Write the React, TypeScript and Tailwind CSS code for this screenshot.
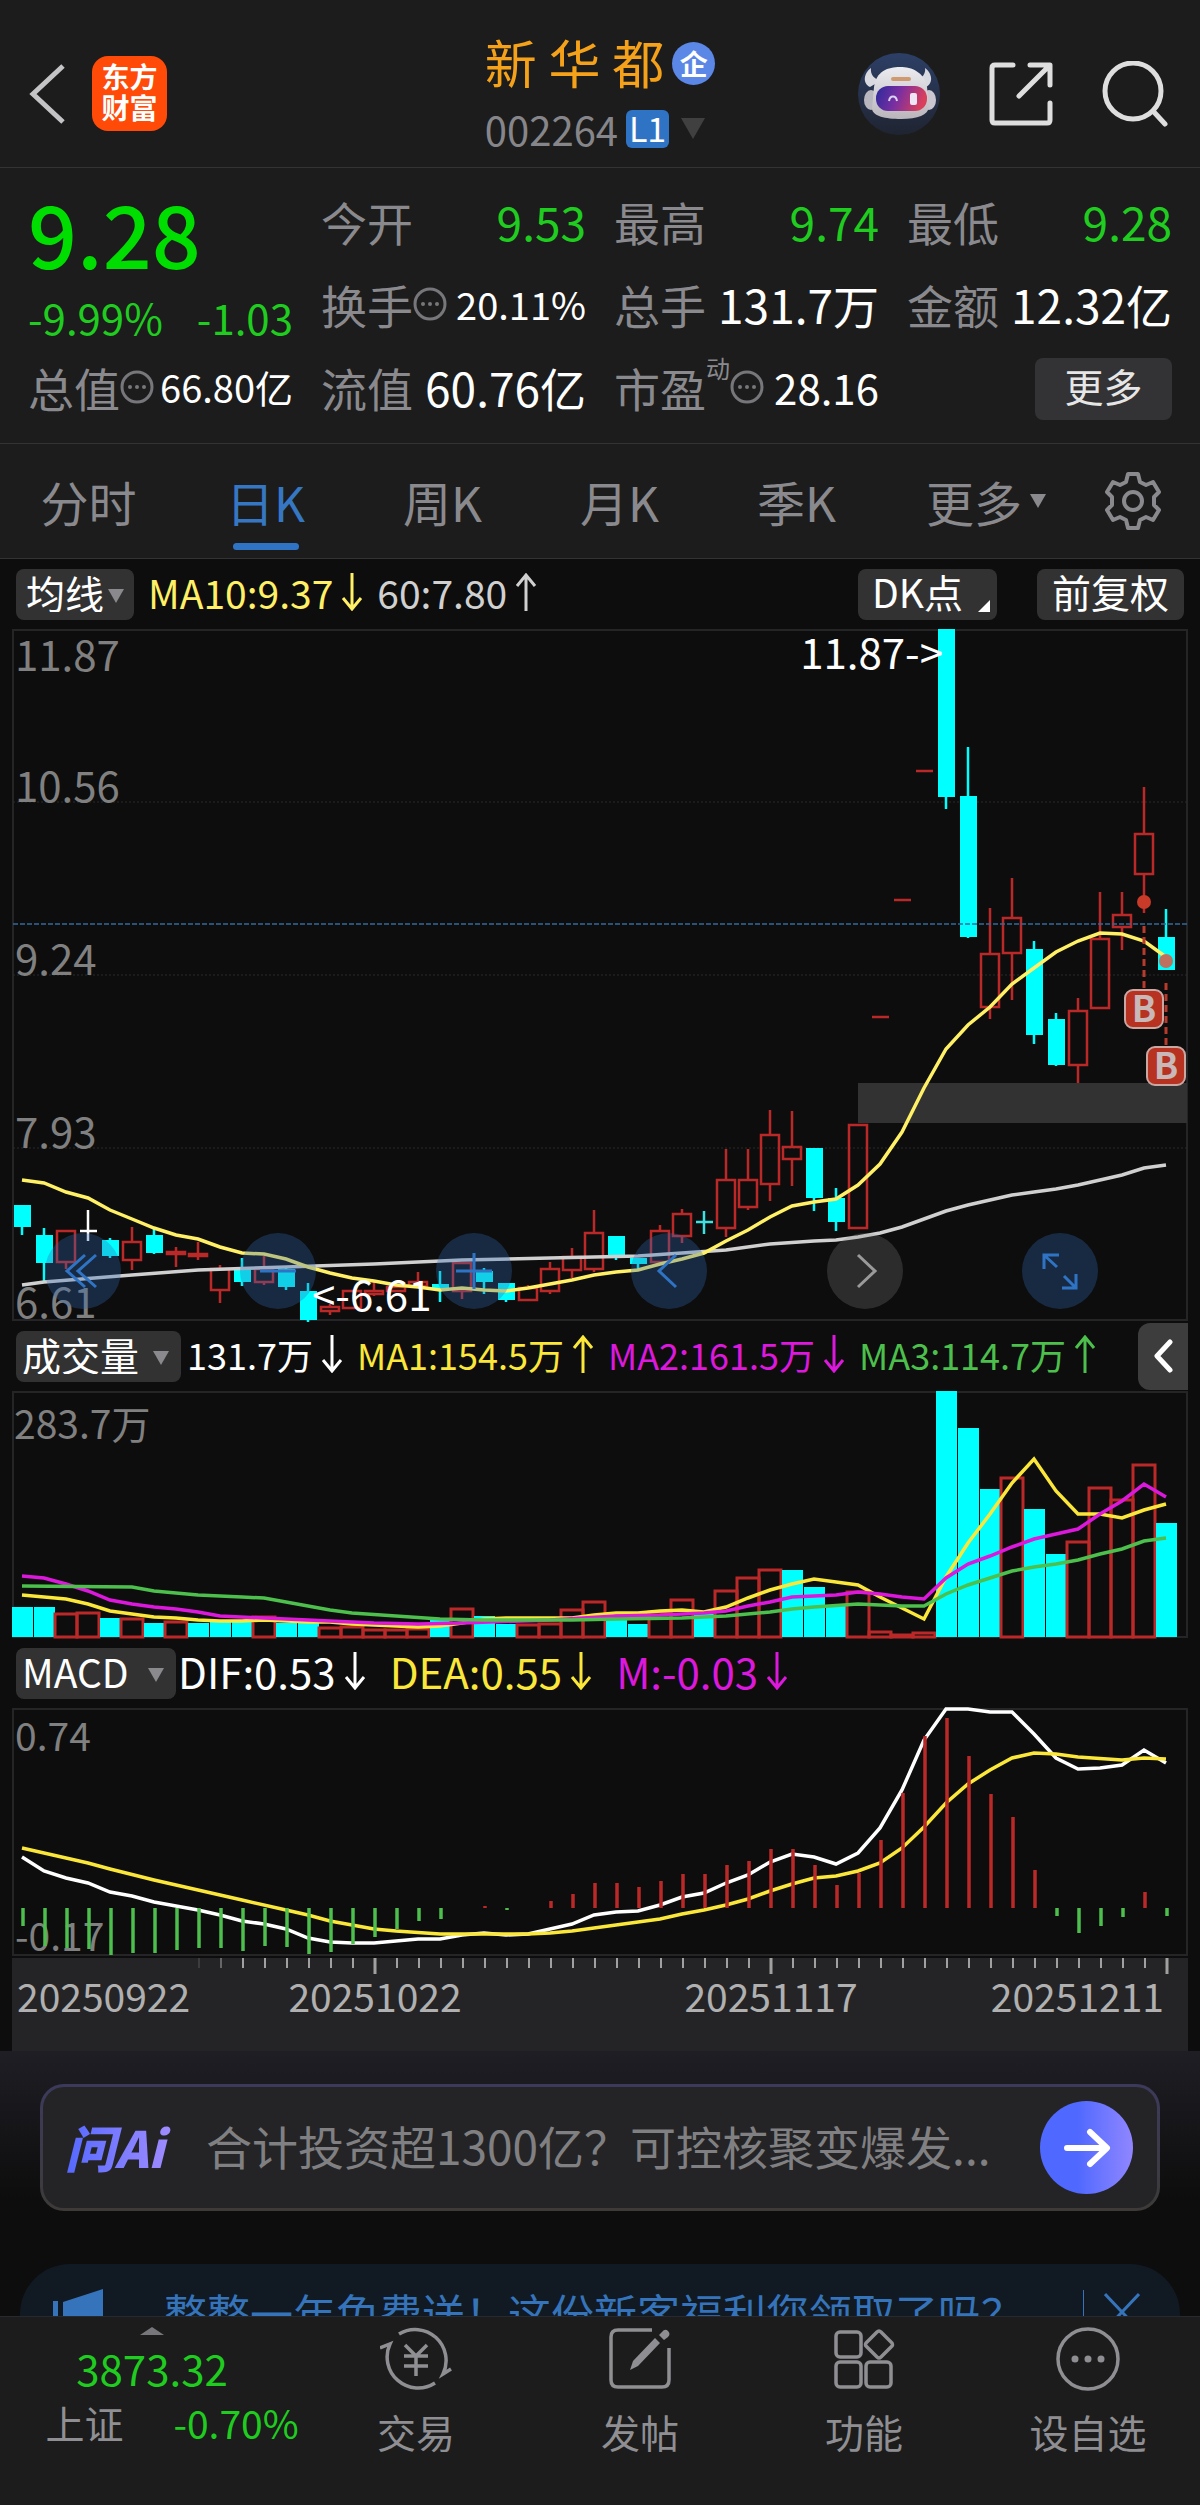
import { ReactNode, useState } from 'react'
import clsx from 'clsx'

type Point = [index: number, y: number]
type Side = 'up' | 'down'
// index is the position in the list: [side, body top, body bottom, high, low]
type Candle = [side: Side, top: number, bottom: number, high: number, low: number]

const STEP = 22
const FIRST = 22
const RED = '#bb2828'
const CYAN = '#00ffff'
const YELLOW = '#fbe73a'
const MAGENTA = '#dd18dd'
const GREEN = '#4cbf4c'

const xAt = (i: number) => FIRST + i * STEP
const toPoints = (points: Point[]) => points.map(([i, y]) => `${xAt(i)},${y}`).join(' ')
const series = (values: number[], start = 0): Point[] => values.map((y, i) => [i + start, y])

const CANDLES: Candle[] = [
  ['down', 1204, 1226, 1204, 1234], ['down', 1234, 1262, 1227, 1281], ['up', 1230, 1261, 1230, 1268],
  ['up', 1230, 1230, 1209, 1240], ['down', 1239, 1255, 1237, 1257], ['up', 1241, 1259, 1226, 1269],
  ['down', 1234, 1252, 1228, 1253], ['up', 1251, 1253, 1246, 1266], ['up', 1253, 1255, 1241, 1259],
  ['up', 1268, 1289, 1264, 1302], ['down', 1268, 1281, 1257, 1285], ['up', 1268, 1281, 1255, 1284],
  ['down', 1268, 1286, 1265, 1289], ['down', 1290, 1319, 1282, 1321], ['up', 1306, 1310, 1303, 1314],
  ['up', 1290, 1307, 1290, 1307], ['up', 1290, 1293, 1279, 1295], ['up', 1286, 1290, 1284, 1291],
  ['up', 1281, 1285, 1271, 1287], ['down', 1283, 1288, 1270, 1301], ['up', 1262, 1290, 1262, 1298],
  ['down', 1270, 1281, 1267, 1293], ['down', 1282, 1299, 1282, 1301], ['up', 1287, 1299, 1284, 1299],
  ['up', 1268, 1290, 1261, 1293], ['up', 1256, 1269, 1247, 1277], ['up', 1232, 1268, 1209, 1271],
  ['down', 1235, 1254, 1235, 1259], ['down', 1257, 1263, 1257, 1268], ['up', 1230, 1261, 1224, 1261],
  ['up', 1213, 1235, 1208, 1242], ['down', 1221, 1221, 1210, 1233], ['up', 1179, 1227, 1148, 1236],
  ['up', 1179, 1206, 1148, 1209], ['up', 1134, 1183, 1109, 1200], ['up', 1146, 1158, 1110, 1185],
  ['down', 1147, 1197, 1147, 1210], ['down', 1197, 1221, 1187, 1230], ['up', 1124, 1227, 1124, 1227],
  ['up', 1016, 1016, 1016, 1016], ['up', 899, 899, 899, 899], ['up', 770, 770, 770, 770],
  ['down', 628, 796, 628, 808], ['down', 795, 936, 746, 937], ['up', 953, 1006, 907, 1018],
  ['up', 917, 952, 877, 999], ['down', 948, 1034, 940, 1043], ['down', 1018, 1064, 1012, 1065],
  ['up', 1010, 1064, 997, 1082], ['up', 938, 1007, 891, 1007], ['up', 914, 926, 891, 949],
  ['up', 833, 873, 786, 912], ['down', 936, 969, 908, 969],
]

const MA10 = series([
  1179, 1182, 1191, 1197, 1209, 1218, 1227, 1234, 1238, 1246, 1252, 1253, 1258, 1266, 1272, 1277, 1280, 1284,
  1286, 1289, 1287, 1289, 1290, 1287, 1283, 1279, 1274, 1271, 1269, 1263, 1258, 1252, 1240, 1229, 1216, 1205,
  1201, 1198, 1184, 1163, 1131, 1087, 1048, 1024, 1006, 983, 967, 951, 940, 932, 933, 940, 956,
])
const MA60: Point[] = [
  [0, 1284], [1, 1281], [5, 1274], [8, 1269], [12, 1266], [16, 1263], [20, 1259], [24, 1257], [28, 1255],
  [30, 1252], [32, 1249], [34, 1243], [36, 1240], [37, 1239], [38, 1236], [39, 1232], [40, 1226], [42, 1210],
  [43, 1204], [44, 1199], [45, 1194], [46, 1191], [47, 1188], [48, 1184], [49, 1179], [50, 1174], [51, 1167],
  [52, 1164],
]

const VOLUMES: [Side, number][] = [
  ['down', 1606], ['down', 1606], ['up', 1612], ['up', 1611], ['down', 1617], ['up', 1617], ['down', 1622],
  ['up', 1620], ['down', 1622], ['down', 1621], ['down', 1621], ['up', 1615], ['down', 1622], ['down', 1621],
  ['up', 1626], ['up', 1625], ['up', 1628], ['up', 1628], ['up', 1627], ['down', 1619], ['up', 1607],
  ['down', 1615], ['down', 1623], ['up', 1623], ['up', 1622], ['up', 1608], ['up', 1600], ['down', 1617],
  ['down', 1623], ['up', 1610], ['up', 1598], ['down', 1613], ['up', 1589], ['up', 1576], ['up', 1568],
  ['down', 1569], ['down', 1586], ['down', 1604], ['up', 1590], ['up', 1630], ['up', 1633], ['up', 1631],
  ['down', 1390], ['down', 1427], ['down', 1488], ['up', 1476], ['down', 1508], ['down', 1553], ['up', 1540],
  ['up', 1486], ['up', 1498], ['up', 1463], ['down', 1522],
]
const VOL_MA1 = series([
  1594, 1596, 1598, 1603, 1610, 1613, 1616, 1617, 1619, 1620, 1620, 1619, 1620, 1621, 1621, 1623, 1624, 1625,
  1626, 1625, 1622, 1618, 1617, 1617, 1617, 1617, 1614, 1612, 1612, 1610, 1609, 1611, 1606, 1597, 1589, 1583,
  1578, 1581, 1584, 1596, 1607, 1618, 1576, 1542, 1513, 1482, 1458, 1490, 1513, 1513, 1517, 1509, 1503,
])
const VOL_MA2: Point[] = [
  [0, 1575], [1, 1577], [2, 1583], [3, 1590], [4, 1599], [5, 1603], [6, 1606], [7, 1608], [8, 1611], [9, 1615],
  [11, 1617], [13, 1619], [16, 1622], [18, 1623], [20, 1622], [24, 1619], [27, 1615], [29, 1614], [31, 1612],
  [32, 1610], [33, 1605], [34, 1601], [35, 1596], [37, 1594], [38, 1591], [39, 1593], [40, 1596], [41, 1598],
  [42, 1577], [43, 1563], [44, 1555], [45, 1546], [46, 1538], [47, 1533], [48, 1528], [49, 1513], [50, 1500],
  [51, 1483], [52, 1496],
]
const VOL_MA3: Point[] = [
  [0, 1585], [5, 1586], [6, 1590], [8, 1594], [10, 1596], [11, 1597], [12, 1601], [13, 1605], [14, 1609],
  [15, 1612], [17, 1615], [19, 1618], [21, 1619], [25, 1619], [27, 1618], [30, 1617], [32, 1615], [34, 1611],
  [35, 1608], [36, 1606], [38, 1603], [40, 1605], [41, 1605], [42, 1593], [43, 1584], [44, 1577], [45, 1570],
  [46, 1566], [47, 1563], [48, 1559], [49, 1553], [50, 1548], [51, 1540], [52, 1537],
]

const ZERO = 1907
const MACD_BARS = [
  1925, 1945, 1947, 1948, 1954, 1952, 1952, 1949, 1947, 1947, 1950, 1945, 1946, 1953, 1951, 1943, 1936, 1928,
  1920, 1918, 1907, 1905, 1909, 1907, 1900, 1893, 1882, 1882, 1886, 1880, 1873, 1873, 1864, 1860, 1848, 1848,
  1864, 1884, 1872, 1839, 1792, 1735, 1717, 1755, 1793, 1816, 1869, 1915, 1932, 1925, 1916, 1891, 1915,
]
const DIF = series([
  1856, 1870, 1877, 1882, 1891, 1895, 1901, 1905, 1909, 1914, 1920, 1923, 1928, 1937, 1941, 1942, 1942, 1940,
  1938, 1938, 1934, 1932, 1934, 1933, 1928, 1923, 1914, 1911, 1910, 1904, 1896, 1892, 1882, 1874, 1861, 1853,
  1856, 1863, 1852, 1827, 1789, 1739, 1708, 1708, 1711, 1711, 1733, 1757, 1768, 1767, 1764, 1749, 1762,
])
const DEA: Point[] = [
  [0, 1847], [2, 1857], [3, 1862], [4, 1868], [6, 1879], [8, 1889], [10, 1899], [12, 1909], [13, 1914],
  [14, 1920], [16, 1928], [17, 1930], [19, 1933], [23, 1933], [24, 1932], [25, 1930], [26, 1927], [28, 1921],
  [29, 1918], [30, 1913], [31, 1909], [32, 1904], [33, 1898], [34, 1890], [35, 1883], [36, 1877], [37, 1875],
  [38, 1870], [39, 1862], [40, 1847], [41, 1826], [42, 1802], [43, 1783], [44, 1769], [45, 1757], [46, 1752],
  [47, 1753], [48, 1756], [50, 1759], [51, 1757], [52, 1758],
]

const PERIODS = ['分时', '日K', '周K', '月K', '季K']

function Triangle({ className }: { className: string }) {
  return (
    <svg viewBox="0 0 16 14" className={className} aria-hidden="true">
      <path d="M0 0H16L8 14Z" fill="currentColor" />
    </svg>
  )
}

function MoreDots() {
  return (
    <svg viewBox="0 0 34 34" className="w-8.5 h-8.5 shrink-0 text-[#77777b]" aria-hidden="true">
      <circle cx="17" cy="17" r="15" fill="none" stroke="currentColor" strokeWidth="3" />
      <circle cx="10" cy="17" r="2" fill="currentColor" />
      <circle cx="17" cy="17" r="2" fill="currentColor" />
      <circle cx="24" cy="17" r="2" fill="currentColor" />
    </svg>
  )
}

function Arrow({ up }: { up?: boolean }) {
  return (
    <svg viewBox="0 0 22 38" className="w-[22px] h-[38px] shrink-0" fill="none" stroke="currentColor" strokeWidth="3" aria-hidden="true">
      {up ? <path d="M11 38V2M2 13L11 2L20 13" /> : <path d="M11 0V36M2 25L11 36L20 25" />}
    </svg>
  )
}

function Indicator({ className, up, children }: { className: string; up?: boolean; children: ReactNode }) {
  return (
    <span className={clsx('flex items-center gap-2 whitespace-nowrap pb-1', className)}>
      {children}
      <Arrow up={up} />
    </span>
  )
}

function ChipSelect({ label, options, className, tight }: { label: string; options: string[]; className: string; tight?: boolean }) {
  return (
    <div className={clsx('relative shrink-0', className)}>
      <select
        aria-label={label}
        className={clsx(
          'w-full h-[51px] rounded-lg bg-[#323232] pb-1 text-[39px] leading-none text-white appearance-none',
          tight ? 'pl-2.5' : 'pl-1.5',
        )}
      >
        {options.map(o => <option key={o}>{o}</option>)}
      </select>
      <Triangle className={clsx('pointer-events-none absolute top-5 w-4 text-[#8a8a8e]', tight ? 'right-2.5' : 'right-3')} />
    </div>
  )
}

function Cell({ label, value, info, sup, size = 'text-[46px]', green }: {
  label: string
  value: string
  info?: boolean
  sup?: string
  size?: string
  green?: boolean
}) {
  return (
    <div className="h-[83px] pb-1 flex items-center justify-between whitespace-nowrap">
      <span className="flex items-center text-[46px] text-[#8a8a8e]">
        {label}
        {sup && <sup className="self-start top-0 -mt-2 text-2xl leading-none">{sup}</sup>}
        {info && <MoreDots />}
      </span>
      <span className={clsx(size, green ? 'text-[#1fcc1f]' : 'text-white')}>{value}</span>
    </div>
  )
}

function Robot() {
  return (
    <svg viewBox="0 0 82 82" className="w-[82px] h-[82px]" aria-hidden="true">
      <defs>
        <linearGradient id="sky" x1="0" y1="0" x2="0" y2="1">
          <stop offset="0" stopColor="#2d3f66" />
          <stop offset="1" stopColor="#1f2431" />
        </linearGradient>
        <linearGradient id="visor" x1="0" y1="0" x2="1" y2="0.2">
          <stop offset="0" stopColor="#2a2a9c" />
          <stop offset="0.5" stopColor="#7c2fa0" />
          <stop offset="1" stopColor="#d8405c" />
        </linearGradient>
        <linearGradient id="shell" x1="0" y1="0" x2="0" y2="1">
          <stop offset="0" stopColor="#ececf0" />
          <stop offset="1" stopColor="#b9b5bb" />
        </linearGradient>
      </defs>
      <circle cx="41" cy="41" r="41" fill="url(#sky)" />
      <ellipse cx="13" cy="47" rx="7" ry="10" fill="#b8b6bf" />
      <ellipse cx="71" cy="47" rx="7" ry="10" fill="#c9c6cf" />
      <path d="M13 15C6 20 4 30 12 34L22 28C17 26 12 22 13 15Z" fill="#d9d9e0" />
      <path d="M67 15C74 20 76 30 68 34L59 26C64 25 68 21 67 15Z" fill="#d9d9e0" />
      <path d="M16 34C18 18 30 14 42 14C54 14 66 19 69 34L71 54C70 62 60 66 43 66C27 66 15 63 14 56Z" fill="url(#shell)" />
      <rect x="33" y="24" width="20" height="4" rx="2" fill="#cf9a70" />
      <rect x="18" y="33" width="51" height="25" rx="12" fill="url(#visor)" />
      <path d="M31 48C32 42 38 42 39 48" fill="none" stroke="#d9d4f5" strokeWidth="2" />
      <rect x="52" y="40" width="7" height="12" rx="2" fill="#efe6f5" />
    </svg>
  )
}

function Header() {
  return (
    <header className="h-[168px] pt-5 border-b border-[#333] grid grid-cols-[1fr_auto_1fr] items-center">
      <div className="flex items-center pl-7 gap-6">
        <button aria-label="返回">
          <svg viewBox="0 0 40 62" className="w-10 h-[62px]" fill="none" stroke="#c4c4c6" strokeWidth="5">
            <path d="M35 3L5 31L35 59" />
          </svg>
        </button>
        <span className="w-[75px] h-[75px] rounded-2xl bg-[#ff4a08] text-white font-bold text-[28px] leading-[31px] flex flex-col items-center justify-center pb-1">
          <span>东方</span>
          <span>财富</span>
        </span>
      </div>
      <div className="flex flex-col gap-5">
        <div className="h-[52px] pb-1 flex items-center gap-2">
          <h1 className="text-[52px] text-[#f5a21a] whitespace-nowrap">新 华 都</h1>
          <span className="w-[43px] h-[43px] mt-1 rounded-full bg-[#5b87e6] text-white font-bold text-[28px] flex items-center justify-center pb-0.5">企</span>
        </div>
        <button className="h-10 pb-0.5 flex items-center gap-2 text-[40px] text-[#86868a]">
          002264
          <span className="w-[43px] h-[38px] rounded-md bg-[#2f74c4] text-white text-[34px] flex items-center justify-center pb-0.5">L1</span>
          <Triangle className="w-6 ml-1 text-[#404040]" />
        </button>
      </div>
      <div className="flex items-center justify-end gap-[49px] pr-8 text-[#dedede]">
        <button aria-label="智能助手"><Robot /></button>
        <button aria-label="分享">
          <svg viewBox="0 0 64 64" className="w-16 h-16" fill="none" stroke="currentColor" strokeWidth="5" strokeLinecap="round" strokeLinejoin="round">
            <path d="M24 3H6Q3 3 3 6V58Q3 61 6 61H58Q61 61 61 58V41M41 3H61V23M60 4L30 34" />
          </svg>
        </button>
        <button aria-label="搜索">
          <svg viewBox="0 0 66 66" className="w-[66px] h-[66px]" fill="none" stroke="currentColor" strokeWidth="5" strokeLinecap="round">
            <circle cx="31" cy="30" r="28" />
            <path d="M51 50L63 63" />
          </svg>
        </button>
      </div>
    </header>
  )
}

function Quote() {
  return (
    <section className="h-[276px] px-7 py-[13px] border-b border-[#333] grid grid-cols-4 gap-x-7">
      <div>
        <p className="h-[110px] pb-2 flex items-center text-[86px] font-medium text-[#00dd00]">9.28</p>
        <p className="h-14 pb-1 flex items-center justify-between text-[42px] text-[#1fcc1f]">
          <span>-9.99%</span>
          <span>-1.03</span>
        </p>
        <Cell label="总值" value="66.80亿" info size="text-[38px]" />
      </div>
      <div>
        <Cell label="今开" value="9.53" green />
        <Cell label="换手" value="20.11%" info size="text-[38px]" />
        <Cell label="流值" value="60.76亿" />
      </div>
      <div>
        <Cell label="最高" value="9.74" green />
        <Cell label="总手" value="131.7万" />
        <Cell label="市盈" value="28.16" sup="动" info size="text-[42px]" />
      </div>
      <div>
        <Cell label="最低" value="9.28" green />
        <Cell label="金额" value="12.32亿" />
        <div className="h-[83px] flex items-center justify-end">
          <button className="w-[137px] h-[62px] pb-1.5 rounded-lg bg-[#333335] text-[39px] text-[#e6e6e6]">更多</button>
        </div>
      </div>
    </section>
  )
}

function PeriodTabs() {
  const [active, setActive] = useState('日K')
  return (
    <nav className="h-[115px] border-b border-[#333] grid grid-cols-[repeat(5,177fr)_202fr_113fr] text-5xl text-[#8a8a8e]">
      {PERIODS.map(p => (
        <button
          key={p}
          onClick={() => setActive(p)}
          className={clsx('relative', p === active && 'text-[#3577c2]')}
        >
          {p}
          {p === active && <span className="absolute bottom-2 left-1/2 -translate-x-1/2 w-[66px] h-[7px] rounded-full bg-[#2f74c4]" />}
        </button>
      ))}
      <button className="flex items-center justify-center gap-2 whitespace-nowrap">
        更多
        <Triangle className="w-4" />
      </button>
      <button aria-label="设置" className="flex items-center pl-4">
        <svg viewBox="0 0 60 60" className="w-[60px] h-[60px]" fill="none" stroke="currentColor" strokeWidth="4" strokeLinejoin="round">
          <path d="M25 3H35L37 11L43 14L50 11L56 21L51 26V34L56 39L50 49L43 46L37 49L35 57H25L23 49L17 46L10 49L4 39L9 34V26L4 21L10 11L17 14L23 11Z" />
          <circle cx="30" cy="30" r="9" />
        </svg>
      </button>
    </nav>
  )
}

function CandleShape({ candle, index }: { candle: Candle; index: number }) {
  const [side, top, bottom, high, low] = candle
  const x = xAt(index)
  if (top === bottom) {
    const color = index === 3 ? '#ffffff' : side === 'up' ? RED : '#3fe0e0'
    return <path d={`M${x - 8} ${top}H${x + 9}M${x} ${high}V${low}`} stroke={color} strokeWidth="2.5" />
  }
  if (side === 'down') {
    return (
      <g>
        <path d={`M${x} ${high}V${low}`} stroke={CYAN} strokeWidth="2.5" />
        <rect x={x - 8} y={top} width="17" height={bottom - top} fill={CYAN} />
      </g>
    )
  }
  return (
    <g fill="none" stroke={RED} strokeWidth="2.5">
      <path d={`M${x} ${high}V${top}M${x} ${bottom}V${low}`} />
      <rect x={x - 9} y={top} width="18" height={bottom - top} />
    </g>
  )
}

function BuyMark({ x, y }: { x: number; y: number }) {
  return (
    <g>
      <rect x={x - 19} y={y - 19} width="38" height="38" rx="8" fill="#b83222" stroke="#c9a8a4" strokeWidth="2" />
      <text x={x} y={y + 13} textAnchor="middle" fontSize="36" className="font-bold" fill="#c8b8b8">B</text>
    </g>
  )
}

function RoundButton({ label, muted, children }: { label: string; muted?: boolean; children: ReactNode }) {
  return (
    <button
      aria-label={label}
      className={clsx('w-[76px] h-[76px] rounded-full', muted ? 'bg-[#8c8c8c]/25 text-[#9a9a9a]' : 'bg-[#326ab5]/32 text-[#2f74c4]')}
    >
      <svg viewBox="0 0 76 76" fill="none" stroke="currentColor" strokeWidth="3">{children}</svg>
    </button>
  )
}

function PriceChart() {
  const labels: [string, number][] = [['11.87', 670], ['10.56', 801], ['9.24', 974], ['7.93', 1147], ['6.61', 1317]]
  return (
    <div className="relative mx-3">
      <svg viewBox="12 628 1176 692" className="block w-full overflow-visible">
        <rect x="13" y="629" width="1174" height="690" fill="none" stroke="#252527" strokeWidth="2" />
        <path d="M13 801H1187M13 974H1187M13 1147H1187" stroke="#2b2b2b" strokeDasharray="2 2" />
        <rect x="858" y="1082" width="329" height="40" fill="#323232" />
        {labels.map(([text, y]) => (
          <text key={text} x="15" y={y} fontSize="42" fill="#808080">{text}</text>
        ))}
        {CANDLES.map((c, i) => <CandleShape key={i} candle={c} index={i} />)}
        <path d="M13 923H1187" stroke="#34689c" strokeWidth="1.5" strokeDasharray="5 2" />
        <polyline points={toPoints(MA60)} fill="none" stroke="#d0d0d0" strokeWidth="3.5" />
        <polyline points={toPoints(MA10)} fill="none" stroke="#fff066" strokeWidth="3.5" />
        <path d="M1144 925V988M1166 982V1045" stroke="#b83a2c" strokeWidth="3" strokeDasharray="7 4" />
        <circle cx="1144" cy="901" r="7" fill="#c93a28" />
        <circle cx="1166" cy="960" r="7" fill="#c0705f" />
        <BuyMark x={1144} y={1008} />
        <BuyMark x={1166} y={1065} />
        <text x="943" y="668" fontSize="42" textAnchor="end" fill="#fff">11.87-&gt;</text>
        <text x="312" y="1310" fontSize="42" fill="#fff">&lt;-6.61</text>
      </svg>
      <div className="absolute left-[33px] right-[90px] bottom-3 flex justify-between">
        <RoundButton label="最左"><path d="M40 22L22 38L40 54M51 22L33 38L51 54" /></RoundButton>
        <RoundButton label="缩小"><path d="M20 38H56" /></RoundButton>
        <RoundButton label="放大"><path d="M20 38H56M38 20V56" /></RoundButton>
        <RoundButton label="左移"><path d="M45 22L28 38L45 54" /></RoundButton>
        <RoundButton label="右移" muted><path d="M31 22L48 38L31 54" /></RoundButton>
        <RoundButton label="全屏"><path d="M37 22H22V36M22 22L35 34M54 41V55H40M54 55L42 43" /></RoundButton>
      </div>
    </div>
  )
}

function VolumeChart() {
  return (
    <svg viewBox="12 1390 1176 247" className="block mx-3 w-[calc(100%-24px)] overflow-visible">
      <rect x="13" y="1391" width="1174" height="245" fill="none" stroke="#252527" strokeWidth="2" />
      <text x="14" y="1438" fontSize="39" fill="#808080">283.7万</text>
      {VOLUMES.map(([side, y], i) => side === 'down'
        ? <rect key={i} x={xAt(i) - 10} y={y} width="21" height={1636 - y} fill={CYAN} />
        : <rect key={i} x={xAt(i) - 11} y={y + 1} width="22" height={1635 - y} fill="none" stroke={RED} strokeWidth="3" />)}
      <polyline points={toPoints(VOL_MA1)} fill="none" stroke={YELLOW} strokeWidth="3.5" />
      <polyline points={toPoints(VOL_MA2)} fill="none" stroke={MAGENTA} strokeWidth="3.5" />
      <polyline points={toPoints(VOL_MA3)} fill="none" stroke={GREEN} strokeWidth="3.5" />
    </svg>
  )
}

function MacdChart() {
  return (
    <svg viewBox="12 1707 1176 248" className="block mx-3 w-[calc(100%-24px)] overflow-visible">
      <rect x="13" y="1708" width="1174" height="246" fill="none" stroke="#252527" strokeWidth="2" />
      <text x="15" y="1750" fontSize="39" fill="#808080">0.74</text>
      <text x="15" y="1950" fontSize="39" fill="#808080">-0.17</text>
      <polyline points={toPoints(DIF)} fill="none" stroke="#fff" strokeWidth="3.5" />
      <polyline points={toPoints(DEA)} fill="none" stroke={YELLOW} strokeWidth="3.5" />
      {MACD_BARS.map((y, i) => (
        <path key={i} d={`M${xAt(i) + 1} ${ZERO}V${y}`} stroke={y < ZERO ? RED : GREEN} strokeWidth="3.5" />
      ))}
    </svg>
  )
}

function DateAxis() {
  const dates: [string, number, 'start' | 'middle' | 'end'][] = [
    ['20250922', 17, 'start'], ['20251022', 375, 'middle'], ['20251117', 771, 'middle'], ['20251211', 1164, 'end'],
  ]
  const major = [16, 34, 52]
  return (
    <svg viewBox="12 1957 1176 93" className="block mx-3 mt-0.5 w-[calc(100%-24px)] bg-[#242426]">
      {MACD_BARS.map((_, i) => i > 7 && (
        <path
          key={i}
          d={`M${xAt(i) + 1} 1957V${major.includes(i) ? 1973 : 1967}`}
          stroke={i < 9 ? '#3c3c3c' : i < 10 ? '#666' : '#a0a0a0'}
          strokeWidth={major.includes(i) ? 3 : 2}
        />
      ))}
      {dates.map(([text, x, anchor]) => (
        <text key={text} x={x} y="2011" fontSize="39" textAnchor={anchor} fill="#b0b0b0">{text}</text>
      ))}
    </svg>
  )
}

function AskAi() {
  return (
    <section className="px-10 pt-[33px] pb-[53px] bg-linear-to-b from-[#1f1e25] to-[#0d0d0d] to-70%">
      <div className="rounded-3xl bg-linear-to-b from-[#3c3a5c] to-[#3d3a38] p-[3px]">
        <div className="h-[121px] rounded-[21px] bg-[#242426] flex items-center pl-[22px] pr-6">
          <span className="w-[141px] pb-1 shrink-0 text-[50px] font-black italic">
            <span className="bg-linear-to-r from-[#5468ff] to-[#a18cff] bg-clip-text text-transparent pr-2">问Ai</span>
          </span>
          <input
            aria-label="问Ai"
            placeholder="合计投资超1300亿？可控核聚变爆发..."
            className="flex-1 min-w-0 pb-1.5 bg-transparent text-[46px] text-white placeholder:text-[#808082] outline-none"
          />
          <button aria-label="发送" className="w-[93px] h-[93px] shrink-0 rounded-full bg-linear-to-r from-[#4f68ff] from-40% to-[#9086ff] flex items-center justify-center">
            <svg viewBox="0 0 48 40" className="w-12 h-10" fill="none" stroke="#fff" strokeWidth="6" strokeLinecap="round" strokeLinejoin="round">
              <path d="M4 20H43M27 4L44 20L27 36" />
            </svg>
          </button>
        </div>
      </div>
    </section>
  )
}

function Banner() {
  return (
    <div className="mx-5 h-[52px] overflow-hidden rounded-t-[50px] bg-[#111a22] text-[#3574bb]">
      <div className="h-[100px] pb-1 flex items-center pl-8 pr-10">
        <svg viewBox="0 0 60 50" className="w-[60px] h-[50px] mr-[52px] shrink-0" aria-hidden="true">
          <path d="M1 14H6V40H1ZM11 15L51 2V48L11 38Z" fill="currentColor" />
        </svg>
        <a href="#gift" className="flex-1 text-[43px] whitespace-nowrap">整整一年免费送！这份新客福利您领取了吗？</a>
        <span className="w-px h-11 bg-[#3574bb] mr-5" />
        <button aria-label="关闭">
          <svg viewBox="0 0 36 40" className="w-9 h-10" fill="none" stroke="currentColor" strokeWidth="3">
            <path d="M1 2L35 38M35 2L1 38" />
          </svg>
        </button>
      </div>
    </div>
  )
}

function NavButton({ label, icon }: { label: string; icon: ReactNode }) {
  return (
    <button className="flex flex-col items-center pt-2.5 gap-[21px] text-[39px] leading-none text-[#8f8f93]">
      <svg viewBox="0 0 72 64" className="w-[72px] h-16" fill="none" stroke="currentColor" strokeWidth="3.5">{icon}</svg>
      {label}
    </button>
  )
}

function BottomBar() {
  return (
    <footer className="h-[189px] border-t border-[#26292e] bg-[#1c1c1c] grid grid-cols-[304fr_repeat(4,224fr)] items-start">
      <button className="flex flex-col items-center pt-2.5">
        <svg viewBox="0 0 24 8" className="w-6 h-2" aria-hidden="true">
          <path d="M0 8L12 0L24 8Z" fill="#77777b" />
        </svg>
        <span className="mt-1.5 h-[54px] flex items-center text-[42px] text-[#1fcc1f]">3873.32</span>
        <span className="h-[54px] pl-10 flex items-center gap-[50px] text-[39px] text-[#8f8f93]">
          上证
          <span className="text-[#1fcc1f]">-0.70%</span>
        </span>
      </button>
      <NavButton
        label="交易"
        icon={<path d="M19 7A31 31 0 0 1 63 47L71 42M55 56A31 31 0 0 1 10 17L0 21M25 18L36 29L47 18M36 29V49M24 29H48M24 39H48" />}
      />
      <NavButton
        label="发帖"
        icon={
          <>
            <path d="M48 3H14Q7 3 7 10V53Q7 60 14 60H58Q65 60 65 53V21" />
            <path d="M51 11L56 16L34 39L26 43L29 34ZM58 5Q61 1 64 4Q67 7 64 10L60 13L55 8Z" fill="currentColor" stroke="none" />
          </>
        }
      />
      <NavButton
        label="功能"
        icon={
          <>
            <rect x="8" y="5" width="25" height="25" rx="4" />
            <rect x="8" y="35" width="25" height="25" rx="4" />
            <rect x="38" y="35" width="25" height="25" rx="4" />
            <path d="M49 5L38 16Q37 18 38 19L49 30Q51 32 53 30L64 19Q65 18 64 16L53 5Q51 3 49 5Z" />
          </>
        }
      />
      <NavButton
        label="设自选"
        icon={
          <>
            <circle cx="36" cy="32" r="30" />
            <g fill="currentColor" stroke="none">
              <circle cx="23" cy="32" r="3.5" />
              <circle cx="36" cy="32" r="3.5" />
              <circle cx="49" cy="32" r="3.5" />
            </g>
          </>
        }
      />
    </footer>
  )
}

export default function App() {
  return (
    <div className="bg-[#1c1c1c] leading-none [font-family:'Noto_Sans_CJK_SC',sans-serif]">
      <Header />
      <Quote />
      <PeriodTabs />

      <main className="bg-[#0d0d0d]">
        <div className="h-[70px] px-4 flex items-center text-[39px]">
          <ChipSelect label="主图指标" options={['均线', 'BOLL']} className="w-[118px]" tight />
          <Indicator className="ml-3.5 text-[#fff066]">MA10:9.37</Indicator>
          <Indicator up className="ml-3.5 text-[#d0d0d0]">60:7.80</Indicator>
          <button className="relative ml-auto w-[139px] h-[51px] pb-1.5 rounded-lg bg-[#323232] pl-3.5 text-left text-white">
            DK点
            <svg viewBox="0 0 12 12" className="absolute right-[7px] bottom-2 w-3 h-3" aria-hidden="true">
              <path d="M12 0V12H0Z" fill="#fff" />
            </svg>
          </button>
          <button className="ml-10 w-[147px] h-[51px] pb-1.5 rounded-lg bg-[#323232] text-white">前复权</button>
        </div>
        <PriceChart />

        <div className="h-[70px] pl-4 pr-3 flex items-center text-[36px]">
          <ChipSelect label="副图指标一" options={['成交量', '成交额']} className="w-[165px]" />
          <Indicator className="ml-1.5 text-white">131.7万</Indicator>
          <Indicator up className="ml-3.5 text-[#fbe73a]">MA1:154.5万</Indicator>
          <Indicator className="ml-3.5 text-[#dd18dd]">MA2:161.5万</Indicator>
          <Indicator up className="ml-3.5 text-[#4cbf4c]">MA3:114.7万</Indicator>
          <button aria-label="展开" className="ml-auto w-[50px] h-[67px] shrink-0 rounded-l-xl bg-[#3d3d3d] flex items-center justify-center">
            <svg viewBox="0 0 20 34" className="w-5 h-[34px]" fill="none" stroke="#fff" strokeWidth="5" strokeLinecap="round" strokeLinejoin="round">
              <path d="M17 3L4 17L17 31" />
            </svg>
          </button>
        </div>
        <VolumeChart />

        <div className="h-[70px] px-4 flex items-center text-[42px]">
          <ChipSelect label="副图指标二" options={['MACD', 'KDJ']} className="w-40" />
          <Indicator className="ml-0.5 text-white">DIF:0.53</Indicator>
          <Indicator className="ml-6 text-[#fbe73a]">DEA:0.55</Indicator>
          <Indicator className="ml-6 text-[#dd18dd]">M:-0.03</Indicator>
        </div>
        <MacdChart />
        <DateAxis />
        <AskAi />
        <Banner />
      </main>
      <BottomBar />
    </div>
  )
}
